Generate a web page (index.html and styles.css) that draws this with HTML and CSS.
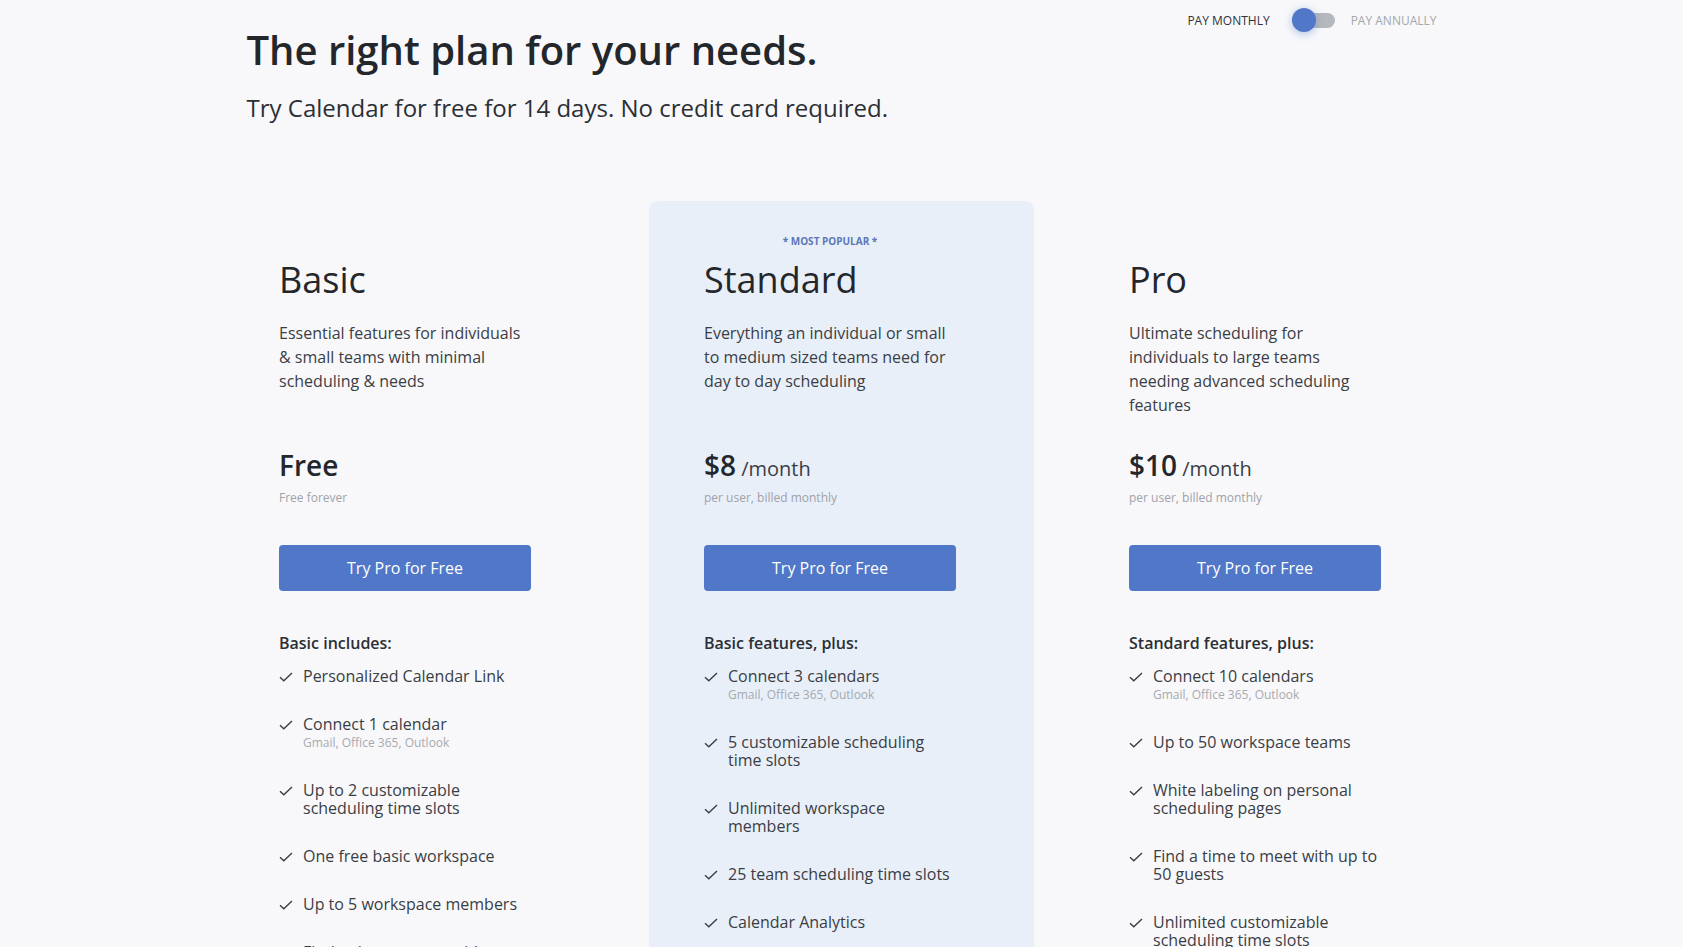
FILE: index.html
```html
<!DOCTYPE html>
<html lang="en">
<head>
    <meta charset="UTF-8">
    <meta name="viewport" content="width=device-width, initial-scale=1.0">
    <title>Pricing - Calendar</title>
    <link rel="stylesheet" href="styles.css">
</head>
<body>

    <!-- Header -->
    <div class="header">
        <div class="billing">
            <span class="billing-label active">PAY MONTHLY</span>
            <span class="switch"><span class="switch-knob"></span></span>
            <span class="billing-label">PAY ANNUALLY</span>
        </div>
        <h1>The right plan for your needs.</h1>
        <p class="subtitle">Try Calendar for free for 14 days. No credit card required.</p>
    </div>

    <!-- Plans -->
    <div class="plans">

        <div class="card">
            <div class="card-tag"></div>
            <h2>Basic</h2>
            <p class="card-desc">Essential features for individuals &amp; small teams with minimal scheduling &amp; needs</p>
            <div class="price"><strong>Free</strong></div>
            <div class="price-note">Free forever</div>
            <button class="try-btn">Try Pro for Free</button>
            <h4>Basic includes:</h4>
            <ul class="features">
                <li><svg class="check" viewBox="0 0 14 10"><path d="M1 5.2 L4.8 8.8 L13 1"/></svg><div>Personalized Calendar Link</div></li>
                <li><svg class="check" viewBox="0 0 14 10"><path d="M1 5.2 L4.8 8.8 L13 1"/></svg><div>Connect 1 calendar<span class="feature-note">Gmail, Office 365, Outlook</span></div></li>
                <li><svg class="check" viewBox="0 0 14 10"><path d="M1 5.2 L4.8 8.8 L13 1"/></svg><div>Up to 2 customizable scheduling time slots</div></li>
                <li><svg class="check" viewBox="0 0 14 10"><path d="M1 5.2 L4.8 8.8 L13 1"/></svg><div>One free basic workspace</div></li>
                <li><svg class="check" viewBox="0 0 14 10"><path d="M1 5.2 L4.8 8.8 L13 1"/></svg><div>Up to 5 workspace members</div></li>
                <li><svg class="check" viewBox="0 0 14 10"><path d="M1 5.2 L4.8 8.8 L13 1"/></svg><div>Find a time to meet with up to 5 guests</div></li>
            </ul>
        </div>

        <div class="card popular">
            <div class="card-tag">* MOST POPULAR *</div>
            <h2>Standard</h2>
            <p class="card-desc">Everything an individual or small to medium sized teams need for day to day scheduling</p>
            <div class="price"><strong>$8</strong> /month</div>
            <div class="price-note">per user, billed monthly</div>
            <button class="try-btn">Try Pro for Free</button>
            <h4>Basic features, plus:</h4>
            <ul class="features">
                <li><svg class="check" viewBox="0 0 14 10"><path d="M1 5.2 L4.8 8.8 L13 1"/></svg><div>Connect 3 calendars<span class="feature-note">Gmail, Office 365, Outlook</span></div></li>
                <li><svg class="check" viewBox="0 0 14 10"><path d="M1 5.2 L4.8 8.8 L13 1"/></svg><div>5 customizable scheduling time slots</div></li>
                <li><svg class="check" viewBox="0 0 14 10"><path d="M1 5.2 L4.8 8.8 L13 1"/></svg><div>Unlimited workspace members</div></li>
                <li><svg class="check" viewBox="0 0 14 10"><path d="M1 5.2 L4.8 8.8 L13 1"/></svg><div>25 team scheduling time slots</div></li>
                <li><svg class="check" viewBox="0 0 14 10"><path d="M1 5.2 L4.8 8.8 L13 1"/></svg><div>Calendar Analytics</div></li>
                <li><svg class="check" viewBox="0 0 14 10"><path d="M1 5.2 L4.8 8.8 L13 1"/></svg><div>Find a time to meet with up to 25 guests</div></li>
            </ul>
        </div>

        <div class="card">
            <div class="card-tag"></div>
            <h2>Pro</h2>
            <p class="card-desc">Ultimate scheduling for individuals to large teams needing advanced scheduling features</p>
            <div class="price"><strong>$10</strong> /month</div>
            <div class="price-note">per user, billed monthly</div>
            <button class="try-btn">Try Pro for Free</button>
            <h4>Standard features, plus:</h4>
            <ul class="features">
                <li><svg class="check" viewBox="0 0 14 10"><path d="M1 5.2 L4.8 8.8 L13 1"/></svg><div>Connect 10 calendars<span class="feature-note">Gmail, Office 365, Outlook</span></div></li>
                <li><svg class="check" viewBox="0 0 14 10"><path d="M1 5.2 L4.8 8.8 L13 1"/></svg><div>Up to 50 workspace teams</div></li>
                <li><svg class="check" viewBox="0 0 14 10"><path d="M1 5.2 L4.8 8.8 L13 1"/></svg><div>White labeling on personal scheduling pages</div></li>
                <li><svg class="check" viewBox="0 0 14 10"><path d="M1 5.2 L4.8 8.8 L13 1"/></svg><div>Find a time to meet with up to 50 guests</div></li>
                <li><svg class="check" viewBox="0 0 14 10"><path d="M1 5.2 L4.8 8.8 L13 1"/></svg><div>Unlimited customizable scheduling time slots</div></li>
            </ul>
        </div>

    </div>

</body>
</html>
```

FILE: styles.css
```css
/* Reset */
* {
    margin: 0;
    padding: 0;
    box-sizing: border-box;
}

body {
    font-family: "Open Sans", "Noto Sans", sans-serif;
    background-color: #f8f8fb;
    color: #262a2f;
}

/* Header */
.header {
    width: 1190px;
    margin: 0 auto;
    display: flex;
    flex-direction: column;
}

.billing {
    align-self: flex-end;
    display: flex;
    align-items: center;
    height: 40px;
    margin-bottom: -14px;
}

.billing-label {
    font-size: 12px;
    color: #a3a6aa;
}

.billing-label.active {
    color: #2f3338;
}

.switch {
    position: relative;
    width: 43px;
    height: 15px;
    margin: 0 16px 0 22px;
    border-radius: 8px;
    background-color: #b5b8bd;
}

.switch-knob {
    position: absolute;
    left: 0;
    top: -5px;
    width: 24px;
    height: 24px;
    border-radius: 50%;
    background-color: #5077c8;
    box-shadow: 0 2px 8px rgba(80, 119, 200, 0.45);
}

.header h1 {
    font-size: 40px;
    font-weight: 600;
    line-height: 48px;
    color: #23272b;
}

.subtitle {
    margin-top: 18px;
    font-size: 24px;
    line-height: 32px;
    color: #2b2f34;
}

/* Plans */
.plans {
    width: 1235px;
    margin: 77px auto 0;
    display: flex;
    gap: 40px;
}

.card {
    width: 385px;
    padding: 32px 55px 40px;
    border-radius: 9px;
}

.card.popular {
    background-color: #e9eff9;
}

.card-tag {
    width: 252px;
    height: 16px;
    font-size: 10px;
    font-weight: 700;
    line-height: 16px;
    text-align: center;
    color: #5a78b8;
}

.card h2 {
    margin-top: 8px;
    font-size: 36px;
    font-weight: 400;
    line-height: 46px;
    color: #23272b;
}

.card-desc {
    width: 252px;
    height: 96px;
    margin-top: 18px;
    font-size: 16px;
    line-height: 24px;
    color: #3a3e44;
}

.price {
    margin-top: 30px;
    font-size: 20px;
    line-height: 36px;
    color: #3a3e44;
}

.price strong {
    font-size: 28px;
    font-weight: 600;
    color: #23272b;
}

.price-note {
    margin-top: 2px;
    font-size: 12px;
    line-height: 18px;
    color: #9ea2a7;
}

.try-btn {
    display: block;
    width: 252px;
    height: 46px;
    margin-top: 38px;
    border: none;
    border-radius: 4px;
    background-color: #5077c8;
    color: white;
    font-family: inherit;
    font-size: 16px;
    cursor: pointer;
}

.try-btn:hover {
    background-color: #3f63b0;
}

.card h4 {
    margin-top: 41px;
    font-size: 16px;
    font-weight: 600;
    line-height: 22px;
    color: #2b2f34;
}

/* Feature list */
.features {
    list-style: none;
    width: 252px;
    margin-top: 13px;
    display: flex;
    flex-direction: column;
    gap: 30px;
}

.features li {
    display: flex;
    gap: 10px;
    font-size: 16px;
    line-height: 18px;
    color: #3a3e44;
}

.check {
    flex: none;
    width: 14px;
    height: 10px;
    margin-top: 5px;
    fill: none;
    stroke: #3a3e44;
    stroke-width: 1.4;
}

.feature-note {
    display: block;
    margin-top: 2px;
    font-size: 12px;
    line-height: 16px;
    color: #a6aaae;
}
```
